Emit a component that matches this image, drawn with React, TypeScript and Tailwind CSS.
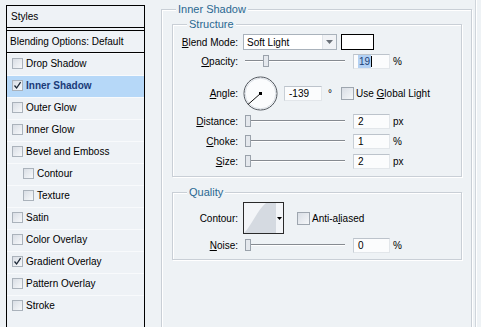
import React from 'react';

const Check: React.FC<{ checked?: boolean }> = ({ checked }) => (
  <span className="w-[11px] h-[11px] border border-[#aab2bb] bg-gradient-to-br from-[#d9dee5] to-[#f7f9fb] flex items-center justify-center shrink-0">
    {checked && (
      <svg width="9" height="9" viewBox="0 0 9 9">
        <path d="M1.5 4.5 L3.6 7 L7.6 1.2" stroke="#1c2836" strokeWidth="1.3" fill="none" />
      </svg>
    )}
  </span>
);

const StyleRow: React.FC<{ label: string; checked?: boolean; active?: boolean; sub?: boolean }> = ({
  label,
  checked,
  active,
  sub,
}) => (
  <div
    className={`h-[22px] flex items-center pb-[2px] border-t border-[#f8fafc] ${sub ? 'pl-[16px]' : 'pl-[5px]'} ${
      active ? 'bg-[#b6d8f8] font-bold text-[#1a3b78]' : 'text-black'
    }`}
  >
    <Check checked={checked} />
    <span className="ml-[3px]">{label}</span>
  </div>
);

const Slider: React.FC<{ pos: number }> = ({ pos }) => (
  <div className="relative w-[100px] h-[18px] shrink-0">
    <div className="absolute left-0 right-0 top-[8px] h-[1px] bg-[#868b91]" />
    <div className="absolute left-0 right-0 top-[9px] h-[1px] bg-white" />
    <div
      className="absolute top-[3px] w-[6px] h-[12px] border border-[#9aa2ab] bg-[#e4e8ed]"
      style={{ left: pos }}
    />
  </div>
);

const NumBox: React.FC<{ children: React.ReactNode; w?: string }> = ({ children, w = 'w-[37px]' }) => (
  <div
    className={`${w} h-[15px] shrink-0 bg-[#fbfcfd] border border-[#e2e6ea] border-t-[#bcc3cb] border-l-[#c8cfd6] flex items-center pl-[4px]`}
  >
    {children}
  </div>
);

const Label: React.FC<{ children: React.ReactNode }> = ({ children }) => (
  <div className="w-[65px] text-right shrink-0">{children}</div>
);

const SliderRow: React.FC<{ label: React.ReactNode; pos: number; value: React.ReactNode; unit: string }> = ({
  label,
  pos,
  value,
  unit,
}) => (
  <div className="h-[18px] flex items-center mt-[2px]">
    <Label>{label}</Label>
    <div className="ml-[7px]">
      <Slider pos={pos} />
    </div>
    <div className="ml-[8px]">
      <NumBox>{value}</NumBox>
    </div>
    <span className="ml-[3px]">{unit}</span>
  </div>
);

const fieldset =
  'border border-[#c9cfd6] shadow-[inset_1px_1px_0_#ffffff,1px_1px_0_#ffffff]';
const legend = 'px-[2px] bg-[#eef2f5] text-[#2a6891] text-[11px] leading-[13px]';

export default function App() {
  return (
    <div
      className="w-[481px] h-[327px] overflow-hidden bg-[#eef2f5] flex text-[10px] leading-[13px] text-black"
      style={{ fontFamily: '"Liberation Sans", Arial, sans-serif' }}
    >
      {/* styles list */}
      <div className="ml-[6px] mt-[5px] w-[139px] h-[340px] border border-black bg-[#eef2f6] shrink-0 flex flex-col">
        <div className="h-[22px] flex items-center pl-[4px] pb-[1px] border-b border-black">Styles</div>
        <div className="h-[2px]" />
        <div className="h-[23px] flex items-center pl-[3px] pb-[1px] border-t border-b border-black">
          Blending Options: Default
        </div>
        <StyleRow label="Drop Shadow" />
        <StyleRow label="Inner Shadow" checked active />
        <StyleRow label="Outer Glow" />
        <StyleRow label="Inner Glow" />
        <StyleRow label="Bevel and Emboss" />
        <StyleRow label="Contour" sub />
        <StyleRow label="Texture" sub />
        <StyleRow label="Satin" />
        <StyleRow label="Color Overlay" />
        <StyleRow label="Gradient Overlay" checked />
        <StyleRow label="Pattern Overlay" />
        <StyleRow label="Stroke" />
      </div>

      {/* settings */}
      <fieldset className={`ml-[16px] mt-[3px] w-[311px] h-[360px] shrink-0 pl-[10px] pr-[9px] ${fieldset}`}>
        <legend className={`ml-[4px] ${legend}`}>Inner Shadow</legend>

        <fieldset className={`mt-[2px] pb-[6px] ${fieldset}`}>
          <legend className={`ml-[14px] ${legend}`}>Structure</legend>

          <div className="h-[18px] flex items-center mt-[2px]">
            <Label>
              <u>B</u>lend Mode:
            </Label>
            <div className="ml-[5px] w-[94px] h-[16px] bg-white border border-[#a9b2bb] flex items-center">
              <span className="pl-[3px] flex-1">Soft Light</span>
              <span className="w-[14px] h-full flex items-center justify-center bg-[#f1f3f6] border-l border-[#e1e5ea]">
                <svg width="7" height="4" viewBox="0 0 7 4">
                  <path d="M0 0 L7 0 L3.5 4 Z" fill="#6b7179" />
                </svg>
              </span>
            </div>
            <div className="ml-[4px] w-[33px] h-[16px] bg-white border border-black" />
          </div>

          <div className="h-[18px] flex items-center mt-[1px]">
            <Label>
              <u>O</u>pacity:
            </Label>
            <div className="ml-[7px]">
              <Slider pos={18} />
            </div>
            <div className="ml-[8px]">
              <NumBox>
                <span className="bg-[#b3d1f3] text-[#1d3f78] px-[1px]">19</span>
                <span className="w-[1px] h-[11px] bg-black" />
              </NumBox>
            </div>
            <span className="ml-[3px]">%</span>
          </div>

          <div className="h-[34px] flex items-center mt-[6px]">
            <Label>
              <u>A</u>ngle:
            </Label>
            <svg className="ml-[5px] shrink-0" width="35" height="35" viewBox="0 0 35 35">
              <circle cx="17.5" cy="17.5" r="16.5" fill="#fbfcfd" stroke="#4d535a" strokeWidth="1" />
              <circle cx="17.5" cy="17.5" r="15.3" fill="none" stroke="#d9dee4" strokeWidth="1" />
              <line x1="17.5" y1="17.5" x2="5" y2="28.5" stroke="#111" strokeWidth="1" />
              <rect x="16" y="16" width="3" height="3" fill="#000" />
            </svg>
            <div className="ml-[6px]">
              <NumBox w="w-[38px]">-139</NumBox>
            </div>
            <span className="ml-[6px]">°</span>
            <span className="ml-[9px]">
              <span className="block w-[13px] h-[13px] border border-[#9ea6af] bg-gradient-to-br from-[#d9dee5] to-[#f5f7f9]" />
            </span>
            <span className="ml-[2px]">
              Use <u>G</u>lobal Light
            </span>
          </div>

          <SliderRow
            label={
              <>
                <u>D</u>istance:
              </>
            }
            pos={0}
            value="2"
            unit="px"
          />
          <SliderRow
            label={
              <>
                <u>C</u>hoke:
              </>
            }
            pos={0}
            value="1"
            unit="%"
          />
          <SliderRow
            label={
              <>
                <u>S</u>ize:
              </>
            }
            pos={0}
            value="2"
            unit="px"
          />
        </fieldset>

        <fieldset className={`mt-[9px] pb-[5px] ${fieldset}`}>
          <legend className={`ml-[14px] ${legend}`}>Quality</legend>

          <div className="h-[32px] flex items-center mt-[3px]">
            <Label>Contour:</Label>
            <div className="ml-[5px] w-[41px] h-[32px] border border-[#2a2a2a] bg-[#f3f5f8] flex">
              <svg width="32" height="30" viewBox="0 0 32 30">
                <path d="M0 30 C 8 22, 14 6, 22 0 L 32 0 L 32 30 Z" fill="#d5dae1" />
              </svg>
              <div className="flex-1 flex items-center justify-center">
                <svg width="5" height="3" viewBox="0 0 5 3">
                  <path d="M0 0 L5 0 L2.5 3 Z" fill="#000" />
                </svg>
              </div>
            </div>
            <span className="ml-[13px]">
              <span className="block w-[13px] h-[13px] border border-[#9ea6af] bg-gradient-to-br from-[#d9dee5] to-[#f5f7f9]" />
            </span>
            <span className="ml-[2px]">
              Anti-a<u>l</u>iased
            </span>
          </div>

          <SliderRow
            label={
              <>
                <u>N</u>oise:
              </>
            }
            pos={0}
            value="0"
            unit="%"
          />
        </fieldset>
      </fieldset>

      <div className="ml-[3px] w-[2px] h-full border-l border-[#cfd5db] bg-white shrink-0" />
    </div>
  );
}
